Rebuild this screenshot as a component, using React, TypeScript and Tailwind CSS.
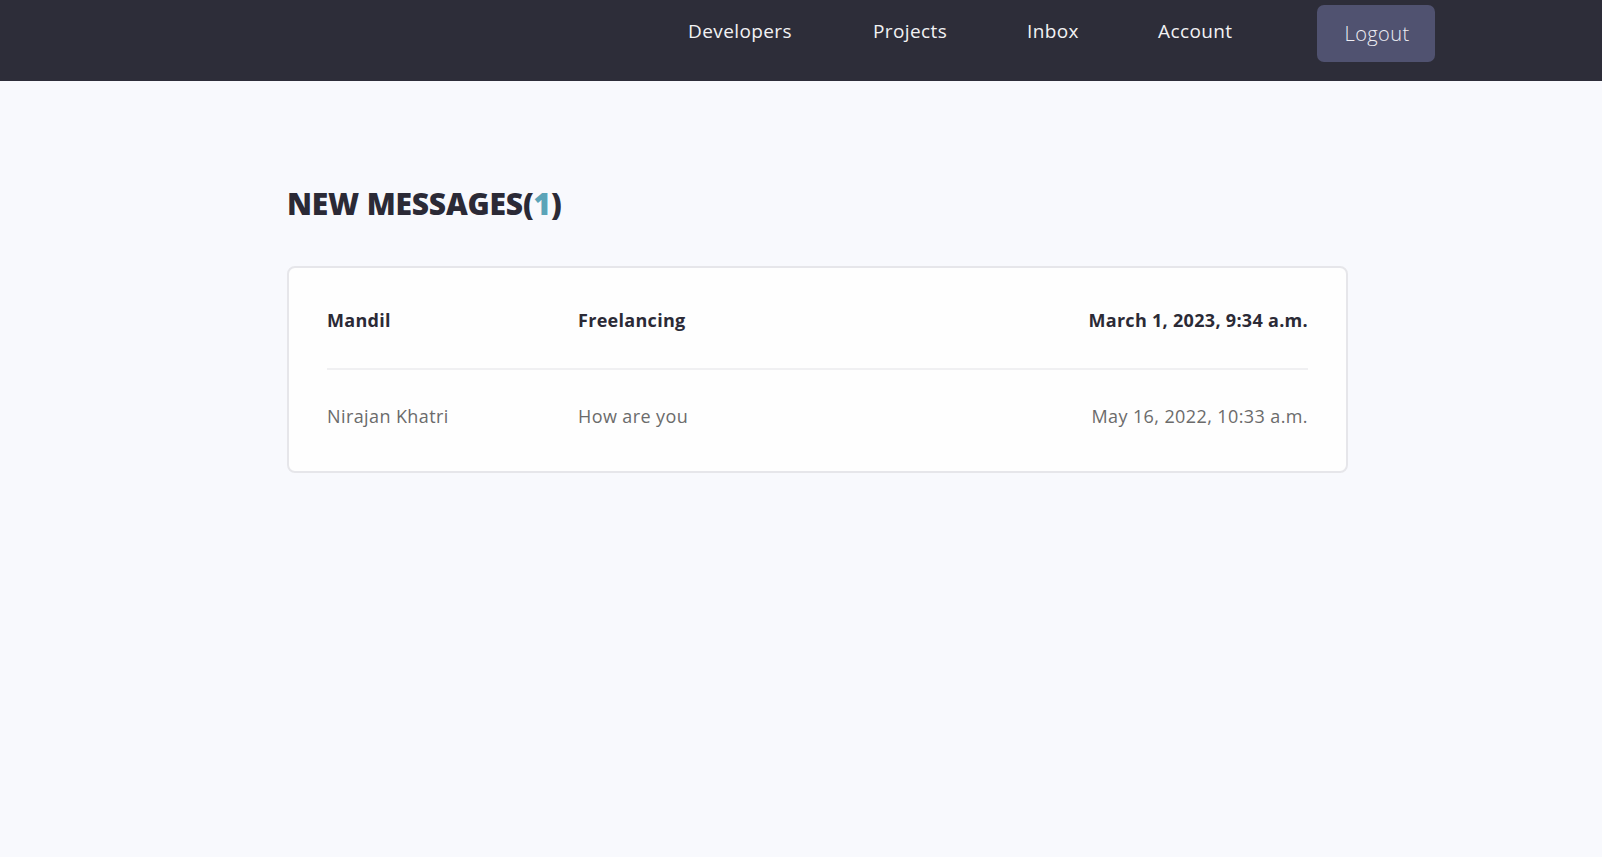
import React from "react";

const font = { fontFamily: '"Open Sans", "Noto Sans", sans-serif' };

export default function App() {
  return (
    <div className="min-h-[857px] bg-[#f8f9fd]" style={font}>
      <header className="h-[81px] bg-[#2d2d39] flex justify-end items-start pt-[5px] pr-[167px]">
        <nav className="flex items-start">
          <a className="w-[185px] h-[53px] flex items-center text-[19px] text-[#f2f2f4] tracking-[0.4px]">Developers</a>
          <a className="w-[154px] h-[53px] flex items-center text-[19px] text-[#f2f2f4] tracking-[0.4px]">Projects</a>
          <a className="w-[131px] h-[53px] flex items-center text-[19px] text-[#f2f2f4] tracking-[0.4px]">Inbox</a>
          <a className="w-[159px] h-[53px] flex items-center text-[19px] text-[#f2f2f4] tracking-[0.4px]">Account</a>
          <button className="w-[118px] h-[57px] rounded-[7px] bg-[#505270] flex items-center justify-center pl-[2px] text-[20px] font-light text-[#eeeef4] tracking-[0.4px]">
            Logout
          </button>
        </nav>
      </header>

      <main className="pl-[287px] pt-[101px]">
        <h1 className="text-[30px] font-extrabold text-[#2b2a36] leading-[44px] tracking-[-0.2px]">
          NEW MESSAGES(<span className="text-[#5ba4b8]">1</span>)
        </h1>

        <div className="mt-[40px] w-[1061px] bg-[#fefefe] border-2 border-[#e6e6ea] rounded-[8px] px-[38px]">
          <div className="h-[102px] pt-[4px] flex items-center text-[18px] font-bold text-[#2b2a36] tracking-[0.3px] border-b-2 border-[#f0f0f2]">
            <span className="w-[251px]">Mandil</span>
            <span className="flex-1">Freelancing</span>
            <span className="text-right">March 1, 2023, 9:34 a.m.</span>
          </div>
          <div className="h-[101px] pb-[8px] flex items-center text-[18px] text-[#6b6b6b] tracking-[0.4px]">
            <span className="w-[251px]">Nirajan Khatri</span>
            <span className="flex-1">How are you</span>
            <span className="text-right">May 16, 2022, 10:33 a.m.</span>
          </div>
        </div>
      </main>
    </div>
  );
}
